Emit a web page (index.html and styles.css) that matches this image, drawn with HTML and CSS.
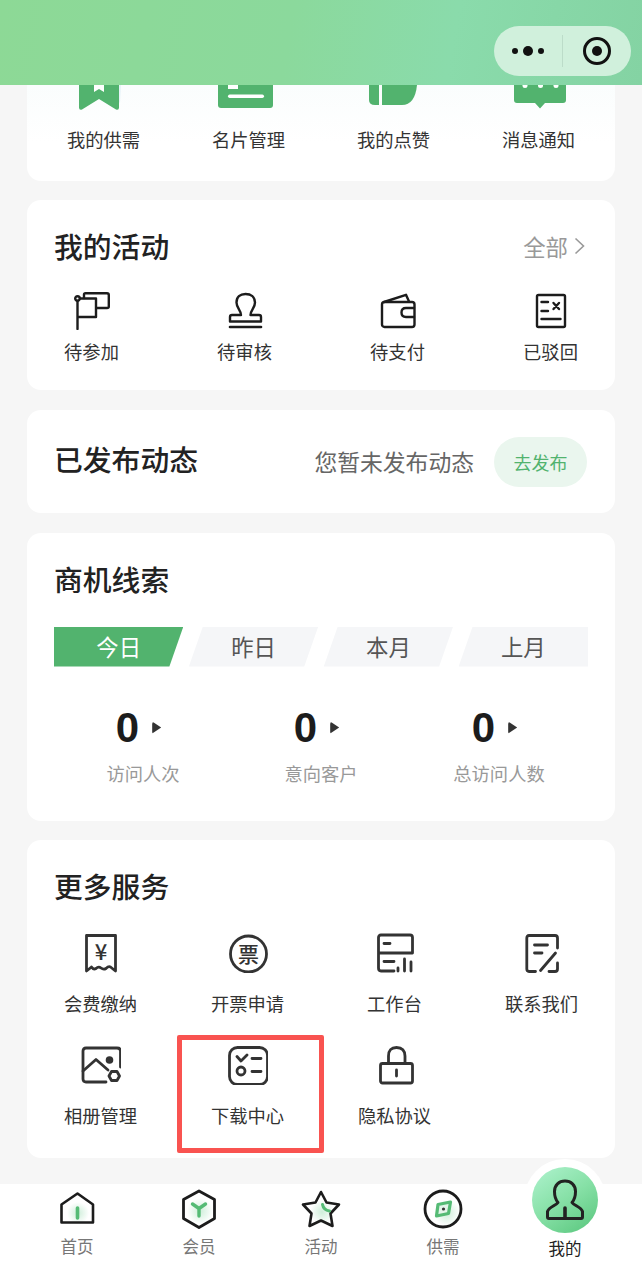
FILE: index.html
```html
<!DOCTYPE html>
<html lang="zh">

<head>
  <meta charset="utf-8">
  <title>我的</title>
  <link rel="stylesheet" href="styles.css">
</head>

<body>
  <header class="top-bar">
    <div class="capsule">
      <svg class="capsule-dots" width="36" height="12" viewBox="0 0 36 12">
        <circle cx="5" cy="6" r="3" />
        <circle cx="18" cy="6" r="5" />
        <circle cx="31" cy="6" r="3" />
      </svg>
      <span class="capsule-line"></span>
      <svg class="capsule-target" width="30" height="30" viewBox="0 0 30 30">
        <circle cx="15" cy="15" r="12.5" fill="none" stroke="#111" stroke-width="3" />
        <circle cx="15" cy="15" r="5" fill="#111" />
      </svg>
    </div>
  </header>

  <main class="content">
    <!-- top shortcuts, the icons are cut off by the header -->
    <section class="card card-shortcuts">
      <div class="shortcut-row">
        <div class="shortcut">
          <svg width="73" height="26" viewBox="0 0 73 26">
            <path d="M30 0H54L53 18Z" fill="#e6f3f8" />
            <path d="M12 0H52V22.5Q52 25.5 49 24.5L32 14L15 24.5Q12 25.5 12 22.5Z" fill="#52b36e" />
            <path d="M27 0H37V7L32 4L27 7Z" fill="#fff" />
          </svg>
          <span>我的供需</span>
        </div>
        <div class="shortcut">
          <svg width="73" height="26" viewBox="0 0 73 26">
            <path d="M6 0H61V20Q61 23 58 23H9Q6 23 6 20Z" fill="#52b36e" />
            <rect x="16" y="0" width="10" height="4" fill="#fff" />
            <rect x="16" y="9.5" width="36" height="3.5" rx="1.7" fill="#fff" />
          </svg>
          <span>名片管理</span>
        </div>
        <div class="shortcut">
          <svg width="73" height="26" viewBox="0 0 73 26">
            <path d="M12 0H22V20H18Q12 20 12 15Z" fill="#52b36e" />
            <path d="M25 0H60Q58 20 45 20H25Z" fill="#52b36e" />
          </svg>
          <span>我的点赞</span>
        </div>
        <div class="shortcut">
          <svg width="73" height="26" viewBox="0 0 73 26">
            <path d="M12 0H64V15Q64 18 61 18H43L38 23.5L33 18H15Q12 18 12 15Z" fill="#52b36e" />
            <circle cx="23" cy="0.5" r="2.5" fill="#fff" />
            <circle cx="38.5" cy="0.5" r="2.5" fill="#fff" />
            <circle cx="54" cy="0.5" r="2.5" fill="#fff" />
          </svg>
          <span>消息通知</span>
        </div>
      </div>
    </section>

    <section class="card card-activity">
      <div class="card-head">
        <h2>我的活动</h2>
        <span class="more">全部
          <svg width="11" height="18" viewBox="0 0 11 18">
            <path d="M1.5 1.5L9.5 9L1.5 16.5" fill="none" stroke="#999" stroke-width="1.6" />
          </svg>
        </span>
      </div>
      <div class="activity-row">
        <div class="activity">
          <svg class="line-icon" width="36" height="38" viewBox="0 0 36 38">
            <circle cx="3.5" cy="6.5" r="2.3" />
            <path d="M3.5 9V37M6 6.5H22V25H4" />
            <path d="M10 6V2.5Q10 1.2 11.5 1.2H33Q34.8 1.2 34.8 3V14.5Q34.8 16 33 16H23" />
          </svg>
          <span>待参加</span>
        </div>
        <div class="activity">
          <svg class="line-icon" width="36" height="38" viewBox="0 0 36 38">
            <path d="M14 23C14 18 9.5 16 9.5 10.5C9.5 5 13 2 18.5 2C24 2 28 5 28 10.5C28 16 23.5 18 23.5 23H32Q34 23 34 25V29.5H3V25Q3 23 5 23Z" />
            <path d="M3 35H34" stroke-width="2.6" />
          </svg>
          <span>待审核</span>
        </div>
        <div class="activity">
          <svg class="line-icon" width="36" height="38" viewBox="0 0 36 38">
            <rect x="2" y="10" width="32.5" height="25" rx="2.5" />
            <path d="M4 10L26 2.8L29 9.5" />
            <path d="M34 16H26Q21.5 16 21.5 20.5Q21.5 25 26 25H34" />
          </svg>
          <span>待支付</span>
        </div>
        <div class="activity">
          <svg class="line-icon" width="36" height="38" viewBox="0 0 36 38">
            <rect x="4" y="3" width="28" height="32" rx="1.5" />
            <path d="M8.5 10H15M8.5 19H15M8.5 27H27.5" />
            <path d="M20.5 11L26 17M26 11L20.5 17" />
          </svg>
          <span>已驳回</span>
        </div>
      </div>
    </section>

    <section class="card card-post">
      <h2>已发布动态</h2>
      <span class="post-tip">您暂未发布动态</span>
      <button class="post-btn">去发布</button>
    </section>

    <section class="card card-leads">
      <h2>商机线索</h2>
      <div class="tabs">
        <div class="tab tab-first active">今日</div>
        <div class="tab">昨日</div>
        <div class="tab">本月</div>
        <div class="tab tab-last">上月</div>
      </div>
      <div class="stats">
        <div class="stat">
          <div class="stat-num">0<i class="stat-arrow"></i></div>
          <span>访问人次</span>
        </div>
        <div class="stat">
          <div class="stat-num">0<i class="stat-arrow"></i></div>
          <span>意向客户</span>
        </div>
        <div class="stat">
          <div class="stat-num">0<i class="stat-arrow"></i></div>
          <span>总访问人数</span>
        </div>
      </div>
    </section>

    <section class="card card-services">
      <h2 class="services-title">更多服务</h2>
      <div class="services">
        <div class="service">
          <svg class="line-icon soft" width="40" height="40" viewBox="0 0 40 40">
            <path d="M5.5 2.5H34.5V38L29.5 34Q27.5 33 25 35.5Q22.5 37 20 35Q17.5 33 15 35.5Q12.5 37 10.5 34L5.5 38Z" />
            <text class="icon-text" x="20" y="27" text-anchor="middle" font-size="22">¥</text>
          </svg>
          <span>会费缴纳</span>
        </div>
        <div class="service">
          <svg class="line-icon soft" width="40" height="40" viewBox="0 0 40 40">
            <circle cx="20.5" cy="21" r="18" />
            <text class="icon-text" x="20.5" y="28.5" text-anchor="middle" font-size="21">票</text>
          </svg>
          <span>开票申请</span>
        </div>
        <div class="service">
          <svg class="line-icon soft" width="40" height="40" viewBox="0 0 40 40">
            <path d="M19 38H6Q3.5 38 3.5 35V4.5Q3.5 2 6 2H35Q37.5 2 37.5 4.5V20H3.5" />
            <path d="M9 10.5H15M9 28.5H19M23 35V38M29.5 26V38M36 29V38" />
          </svg>
          <span>工作台</span>
        </div>
        <div class="service">
          <svg class="line-icon soft" width="40" height="40" viewBox="0 0 40 40">
            <path d="M13.5 38.5H7Q4.8 38.5 4.8 36V5Q4.8 2.5 7 2.5H33Q35.5 2.5 35.5 5V15M35.5 30V36Q35.5 38.5 33 38.5H27" />
            <path d="M12.5 12H25.5M12.5 20H20M33.5 20L18.5 37.5" />
          </svg>
          <span>联系我们</span>
        </div>
        <div class="service">
          <svg class="line-icon soft" width="40" height="40" viewBox="0 0 40 40">
            <path d="M25 37H5Q2 37 2 34V6Q2 3 5 3H36Q39.5 3 39.5 6V22" />
            <path d="M2 26L15 14.5L27 25" />
            <circle cx="28.5" cy="15" r="3.8" fill="#333" stroke="none" />
            <path d="M28 31L30.5 26.5H36L38.5 31L36 35.5H30.5Z" />
          </svg>
          <span>相册管理</span>
        </div>
        <div class="service">
          <div class="highlight"></div>
          <svg class="line-icon soft" width="40" height="40" viewBox="0 0 40 40">
            <rect x="1.5" y="2.5" width="38" height="37" rx="8" />
            <path d="M9 11.5L13 16L19 10M24 13.5H33M24 26.5H33" />
            <circle cx="13" cy="26" r="4" />
          </svg>
          <span>下载中心</span>
        </div>
        <div class="service">
          <svg class="line-icon soft" width="40" height="40" viewBox="0 0 40 40">
            <rect x="5.5" y="18.5" width="32" height="19.5" rx="2" />
            <path d="M13.5 18.5V11Q13.5 2.5 21.5 2.5Q30 2.5 30 11V18.5M21.5 25V31" />
          </svg>
          <span>隐私协议</span>
        </div>
      </div>
    </section>
  </main>

  <nav class="tabbar">
    <div class="tabbar-item">
      <svg width="40" height="40" viewBox="0 0 40 40">
        <circle cx="21" cy="24" r="11" fill="url(#glow)" />
        <path d="M4.5 33.5V15.5L20.5 4.5L36 15.5V33.5Z" fill="none" stroke="#1c1c1c" stroke-width="2.6" stroke-linejoin="round" />
        <path d="M20.5 19V29" stroke="#55bb75" stroke-width="3.6" stroke-linecap="round" />
      </svg>
      <span>首页</span>
    </div>
    <div class="tabbar-item">
      <svg width="40" height="40" viewBox="0 0 40 40">
        <circle cx="21" cy="22" r="13" fill="url(#glow)" />
        <path d="M20 2L35.5 10.5V29.5L20 38.5L4.5 29.5V10.5Z" fill="none" stroke="#1c1c1c" stroke-width="2.8" stroke-linejoin="round" />
        <path d="M13.5 15L20 19.5L26.5 15M20 19.5V27" fill="none" stroke="#55bb75" stroke-width="3.4" stroke-linecap="round" stroke-linejoin="round" />
      </svg>
      <span>会员</span>
    </div>
    <div class="tabbar-item">
      <svg width="40" height="40" viewBox="0 0 40 40">
        <circle cx="21" cy="23" r="12" fill="url(#glow)" />
        <path d="M20 3L25.5 13.5L38 15.5L29.5 24.5L31.5 37L20 31.5L8.5 37L10.5 24.5L2 15.5L14.5 13.5Z" fill="none" stroke="#1c1c1c" stroke-width="2.6" stroke-linejoin="round" />
        <path d="M21.5 15.5Q22.5 21 28.5 22" fill="none" stroke="#55bb75" stroke-width="3" stroke-linecap="round" />
      </svg>
      <span>活动</span>
    </div>
    <div class="tabbar-item">
      <svg width="40" height="40" viewBox="0 0 40 40">
        <circle cx="24" cy="24" r="13" fill="url(#glow)" />
        <circle cx="20" cy="20" r="18" fill="none" stroke="#1c1c1c" stroke-width="2.8" />
        <path d="M15 15.5L27.5 13L25.5 24.5L13.5 27Z" fill="#e4f5ea" stroke="#55bb75" stroke-width="3.2" stroke-linejoin="round" />
        <circle cx="20.5" cy="20" r="1.6" fill="#333" />
      </svg>
      <span>供需</span>
    </div>
    <div class="tabbar-item tabbar-me">
      <div class="me-halo">
        <div class="me-circle">
          <svg width="40" height="42" viewBox="0 0 40 42">
            <path d="M13 23.5C10 20 9.5 16 9.5 12.5C9.5 6 14 2 20 2C26 2 30.5 6 30.5 12.5C30.5 16 30 20 27 23.5C29 26.5 36 28 37.5 32.5V38Q37.5 39.5 36 39.5H4Q2.5 39.5 2.5 38V32.5C4 28 11 26.5 13 23.5Z" fill="none" stroke="#222" stroke-width="3" stroke-linejoin="round" />
            <path d="M20 29V38" stroke="#222" stroke-width="3.6" stroke-linecap="round" />
          </svg>
        </div>
      </div>
      <span>我的</span>
    </div>
  </nav>

  <svg class="svg-defs" width="0" height="0">
    <defs>
      <radialGradient id="glow">
        <stop offset="0" stop-color="#cfeeda" />
        <stop offset="1" stop-color="#ffffff" />
      </radialGradient>
    </defs>
  </svg>
</body>

</html>
```

FILE: styles.css
```css
* {
  box-sizing: border-box;
}

body {
  margin: 0;
  width: 642px;
  height: 1268px;
  overflow: hidden;
  display: flex;
  flex-direction: column;
  background-color: #f6f6f6;
  color: #222;
  font-family: "Noto Sans CJK SC", "Noto Sans", sans-serif;
}

/* the titles sit 2px above the middle of their line */
h2 {
  margin: -2px 0 2px;
  font-size: 28.8px;
  line-height: 40px;
  font-weight: 500;
  color: #222;
}

svg {
  display: block;
}

.svg-defs {
  position: absolute;
}

/* header */
.top-bar {
  height: 85px;
  flex-shrink: 0;
  padding: 26px 11px 0 0;
  display: flex;
  justify-content: flex-end;
  align-items: flex-start;
  background: linear-gradient(100deg, #8dd996 0%, #8bd99c 45%, #8adbab 70%, #84d3a3 100%);
}

.capsule {
  width: 137px;
  height: 50px;
  border-radius: 25px;
  background-color: #d0f0dc;
  display: flex;
  align-items: center;
}

.capsule-dots {
  margin-left: 16px;
  fill: #111;
}

.capsule-line {
  width: 1px;
  height: 32px;
  margin-left: 16px;
  background-color: #bcdcc9;
}

.capsule-target {
  margin-left: 19px;
}

/* cards */
.content {
  flex: 1;
  padding: 0 27px;
  display: flex;
  flex-direction: column;
  gap: 19.5px;
}

.card {
  background-color: #fff;
  border-radius: 14px;
}

.card-shortcuts {
  height: 95.5px;
  border-radius: 0 0 14px 14px;
  background: linear-gradient(#fafdfd, #fff 60%);
}

.shortcut-row {
  padding: 0 40px;
  display: flex;
  justify-content: space-between;
}

.shortcut {
  width: 73px;
  display: flex;
  flex-direction: column;
  align-items: center;
  gap: 16px;
  font-size: 18.3px;
  line-height: 24px;
  white-space: nowrap;
  color: #333;
}

.card-activity {
  height: 190px;
  padding-top: 28px;
}

.card-head {
  padding: 0 30px 0 27px;
  display: flex;
  justify-content: space-between;
  align-items: center;
}

.more {
  margin-top: -5px;
  display: flex;
  align-items: center;
  gap: 6px;
  font-size: 22.4px;
  color: #999;
}

.activity-row {
  margin-top: 24px;
  padding: 0 37px;
  display: flex;
  justify-content: space-between;
}

.activity {
  width: 55px;
  display: flex;
  flex-direction: column;
  align-items: center;
  gap: 9px;
  font-size: 18.3px;
  line-height: 24px;
  white-space: nowrap;
  color: #333;
}

.line-icon {
  fill: none;
  stroke: #1c1c1c;
  stroke-width: 2.4;
  stroke-linecap: round;
  stroke-linejoin: round;
}

.line-icon.soft {
  stroke: #333;
  stroke-width: 2.8;
}

.icon-text {
  fill: #333;
  stroke: none;
  font-family: "Noto Sans CJK SC", sans-serif;
  font-weight: 500;
}

.card-post {
  height: 103.5px;
  padding: 0 28px 0 27px;
  display: flex;
  align-items: center;
}

.post-tip {
  margin-left: auto;
  font-size: 22.8px;
  color: #666;
}

.post-btn {
  width: 93px;
  height: 50px;
  margin: 1px 0 0 20px;
  border: none;
  border-radius: 25px;
  background-color: #eaf6ee;
  color: #52b36e;
  font-family: inherit;
  font-size: 18px;
}

/* leads */
.card-leads {
  height: 288px;
  padding: 28px 27px 0 27px;
}

.tabs {
  margin-top: 28px;
  display: flex;
  gap: 5.5px;
}

.tab {
  flex: 1;
  height: 40px;
  padding-bottom: 2px;
  display: flex;
  justify-content: center;
  align-items: center;
  background-color: #f5f6f8;
  color: #555;
  font-size: 22.4px;
  clip-path: polygon(14px 0, 100% 0, calc(100% - 14px) 100%, 0 100%);
}

.tab-first {
  clip-path: polygon(0 0, 100% 0, calc(100% - 14px) 100%, 0 100%);
}

.tab-last {
  clip-path: polygon(14px 0, 100% 0, 100% 100%, 0 100%);
}

.tab.active {
  background-color: #52b36e;
  color: #fff;
}

.stats {
  margin-top: 39px;
  display: grid;
  grid-template-columns: repeat(3, 1fr);
}

.stat {
  display: flex;
  flex-direction: column;
  align-items: center;
  gap: 11px;
  font-size: 18.3px;
  line-height: 24px;
  color: #999;
}

.stat-num {
  height: 44px;
  margin-right: 9px;
  display: flex;
  align-items: center;
  gap: 13px;
  font-family: "Liberation Sans", sans-serif;
  font-size: 42px;
  font-weight: 700;
  color: #1c1c1c;
}

.stat-arrow {
  width: 9px;
  height: 12px;
  background-color: #333;
  border-radius: 2px;
  clip-path: polygon(0 0, 100% 50%, 0 100%);
}

/* services */
.card-services {
  height: 318px;
  padding-top: 28px;
}

.services-title {
  padding-left: 27px;
}

.services {
  margin-top: 27px;
  display: grid;
  grid-template-columns: repeat(4, 1fr);
  row-gap: 30px;
}

.service {
  position: relative;
  display: flex;
  flex-direction: column;
  align-items: center;
  gap: 18px;
  font-size: 18.3px;
  line-height: 24px;
  color: #333;
}

.highlight {
  position: absolute;
  left: 3px;
  top: -10px;
  width: 147px;
  height: 118px;
  border: 5px solid #f95350;
  border-radius: 2px;
}

/* bottom bar */
.tabbar {
  height: 84.5px;
  flex-shrink: 0;
  padding: 5px 16px 0;
  display: flex;
  background-color: #fff;
}

.tabbar-item {
  position: relative;
  flex: 1;
  display: flex;
  flex-direction: column;
  align-items: center;
  gap: 5px;
  font-size: 16.5px;
  line-height: 24px;
  color: #777;
}

.tabbar-me {
  justify-content: flex-end;
  padding-bottom: 8px;
  color: #222;
}

.me-halo {
  position: absolute;
  left: 20px;
  top: -30px;
  width: 82px;
  height: 82px;
  padding: 8px;
  border-radius: 50%;
  background-color: #fff;
}

.me-circle {
  width: 66px;
  height: 66px;
  display: flex;
  justify-content: center;
  align-items: center;
  border-radius: 50%;
  background: linear-gradient(145deg, #b0f3cf 0%, #86e0a6 50%, #57c57b 100%);
}
```
